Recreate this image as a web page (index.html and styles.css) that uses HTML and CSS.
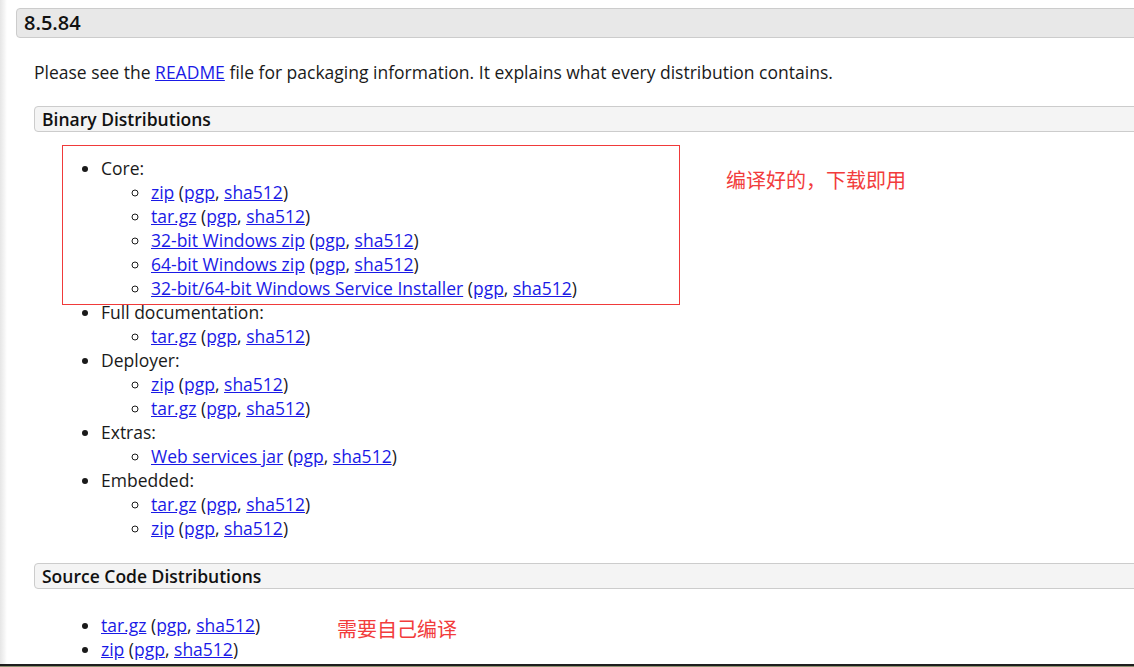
FILE: index.html
```html
<!DOCTYPE html>
<html>
<head>
<meta charset="utf-8">
<link rel="stylesheet" href="styles.css">
</head>
<body>
<div class="frame">
  <div class="viewport">
    <div class="edge"></div>
    <div class="main">
      <h3 class="version">8.5.84</h3>
      <div class="section">
        <p class="intro">Please see the <a href="#">README</a> file for packaging information. It explains what every distribution contains.</p>
        <h4 class="sub">Binary Distributions</h4>
        <ul class="dist">
          <li>Core:
            <ul>
              <li><a href="#">zip</a> (<a href="#">pgp</a>, <a href="#">sha512</a>)</li>
              <li><a href="#">tar.gz</a> (<a href="#">pgp</a>, <a href="#">sha512</a>)</li>
              <li><a href="#">32-bit Windows zip</a> (<a href="#">pgp</a>, <a href="#">sha512</a>)</li>
              <li><a href="#">64-bit Windows zip</a> (<a href="#">pgp</a>, <a href="#">sha512</a>)</li>
              <li><a href="#">32-bit/64-bit Windows Service Installer</a> (<a href="#">pgp</a>, <a href="#">sha512</a>)</li>
            </ul>
          </li>
          <li>Full documentation:
            <ul>
              <li><a href="#">tar.gz</a> (<a href="#">pgp</a>, <a href="#">sha512</a>)</li>
            </ul>
          </li>
          <li>Deployer:
            <ul>
              <li><a href="#">zip</a> (<a href="#">pgp</a>, <a href="#">sha512</a>)</li>
              <li><a href="#">tar.gz</a> (<a href="#">pgp</a>, <a href="#">sha512</a>)</li>
            </ul>
          </li>
          <li>Extras:
            <ul>
              <li><a href="#">Web services jar</a> (<a href="#">pgp</a>, <a href="#">sha512</a>)</li>
            </ul>
          </li>
          <li>Embedded:
            <ul>
              <li><a href="#">tar.gz</a> (<a href="#">pgp</a>, <a href="#">sha512</a>)</li>
              <li><a href="#">zip</a> (<a href="#">pgp</a>, <a href="#">sha512</a>)</li>
            </ul>
          </li>
        </ul>
        <h4 class="sub">Source Code Distributions</h4>
        <ul class="dist">
          <li><a href="#">tar.gz</a> (<a href="#">pgp</a>, <a href="#">sha512</a>)</li>
          <li><a href="#">zip</a> (<a href="#">pgp</a>, <a href="#">sha512</a>)</li>
        </ul>
      </div>
    </div>
    <div class="mark-box"></div>
    <div class="note note-core">编译好的，下载即用</div>
    <div class="note note-src">需要自己编译</div>
  </div>
  <div class="bottom-line"></div>
</div>
</body>
</html>
```

FILE: styles.css
```css
html, body {
  margin: 0;
  padding: 0;
  background: #fff;
}
body {
  width: 1134px;
  height: 667px;
  overflow: hidden;
  font-family: "Open Sans", "Liberation Sans", sans-serif;
  color: #1a1a1a;
}
.frame {
  display: flex;
  flex-direction: column;
  height: 667px;
}
.viewport {
  position: relative;
  flex: 1;
  display: flex;
  overflow: hidden;
}
.edge {
  width: 7px;
  flex: none;
  background: linear-gradient(to right, #e6e6e6, #f4f4f4 60%, #ffffff);
}
.main {
  flex: none;
  width: 1200px;
  padding-left: 9px;
  padding-top: 8px;
}
.version {
  margin: 0;
  height: 28px;
  line-height: 28px;
  font-size: 20px;
  font-weight: 600;
  padding-left: 7px;
  background: #e8e8e8;
  border: 1px solid #cccccc;
  border-radius: 4px;
  color: #111;
}
.section {
  padding-left: 18px;
}
.intro {
  margin: 22px 0 0 0;
  font-size: 17.5px;
  line-height: 24px;
}
a {
  color: #1a1ae6;
  text-decoration: underline;
}
.sub {
  margin: 22px 0 0 0;
  height: 24px;
  line-height: 24px;
  font-size: 17.5px;
  font-weight: 600;
  padding-left: 7px;
  background: #f4f4f4;
  border: 1px solid #cccccc;
  border-radius: 4px;
  color: #111;
}
.dist {
  margin: 24px 0 0 0;
  padding-left: 67px;
  font-size: 17.5px;
  line-height: 24px;
}
.dist ul {
  margin: 0;
  padding-left: 50px;
  list-style: circle;
}
.dist + .sub {
  margin-top: 23px;
}
.mark-box {
  position: absolute;
  left: 62px;
  top: 145px;
  width: 616px;
  height: 158px;
  border: 1px solid #f03a3a;
}
.note {
  position: absolute;
  color: #f23c3c;
  font-family: "Noto Sans CJK SC", sans-serif;
  font-size: 20px;
  line-height: 24px;
}
.note-core {
  left: 726px;
  top: 168px;
}
.note-src {
  left: 337px;
  top: 617px;
}
.bottom-line {
  flex: none;
  height: 2px;
  background: #1e1e1e;
  border-bottom: 1px solid #8c9170;
}
```
